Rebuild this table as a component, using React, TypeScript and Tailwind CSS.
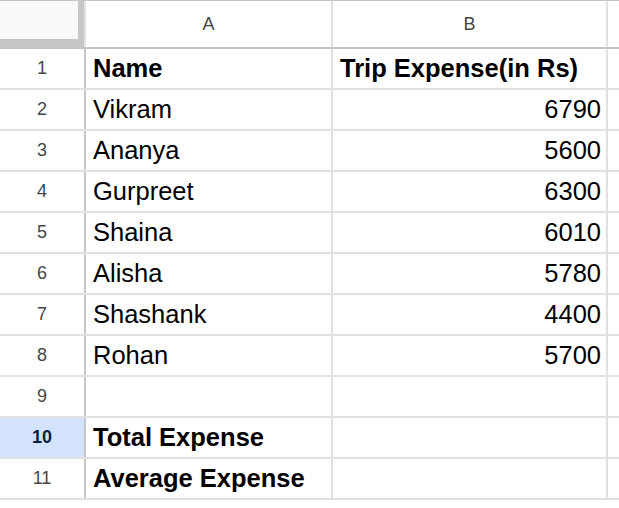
const rows: { name: string; amount: string; bold?: boolean }[] = [
  { name: "Name", amount: "Trip Expense(in Rs)", bold: true },
  { name: "Vikram", amount: "6790" },
  { name: "Ananya", amount: "5600" },
  { name: "Gurpreet", amount: "6300" },
  { name: "Shaina", amount: "6010" },
  { name: "Alisha", amount: "5780" },
  { name: "Shashank", amount: "4400" },
  { name: "Rohan", amount: "5700" },
  { name: "", amount: "" },
  { name: "Total Expense", amount: "", bold: true },
  { name: "Average Expense", amount: "", bold: true },
];

const App = () => {
  return (
    <div
      className="w-[619px] h-[508px] overflow-hidden bg-white border-t border-[#c4c7c5]"
      style={{ fontFamily: '"Liberation Sans", Arial, sans-serif' }}
    >
      {/* column headers */}
      <div className="flex h-[48px] border-b-2 border-[#c4c7c5]">
        <div className="w-[86px] shrink-0 border-r-2 border-[#e1e1e1]">
          <div className="w-[84px] h-[46px] bg-[#f8f9fa] border-r-[6px] border-b-[8px] border-[#c4c7c5]" />
        </div>
        <div className="w-[247px] shrink-0 border-r-2 border-[#e1e1e1] flex items-center justify-center text-[18px] text-[#444746]">
          A
        </div>
        <div className="w-[275px] shrink-0 border-r-2 border-[#e1e1e1] flex items-center justify-center text-[18px] text-[#444746]">
          B
        </div>
        <div className="flex-1" />
      </div>

      {rows.map((row, i) => {
        const selected = i === 9;
        return (
          <div key={i} className="flex h-[41px] border-b-2 border-[#e1e1e1]">
            <div
              className={
                selected
                  ? "w-[86px] shrink-0 border-r-2 border-[#c4c7c5] bg-[#d3e3fd] flex items-center justify-center text-[18px] font-bold text-[#0b1f44]"
                  : "w-[86px] shrink-0 border-r-2 border-[#c4c7c5] flex items-center justify-center text-[18px] text-[#444746]"
              }
            >
              {i + 1}
            </div>
            <div
              className={
                row.bold
                  ? "w-[247px] shrink-0 border-r-2 border-[#e1e1e1] pl-[7px] flex items-center text-[25.5px] font-bold text-black whitespace-nowrap"
                  : "w-[247px] shrink-0 border-r-2 border-[#e1e1e1] pl-[7px] flex items-center text-[25.5px] text-black whitespace-nowrap"
              }
            >
              {row.name}
            </div>
            <div
              className={
                row.bold
                  ? "w-[275px] shrink-0 border-r-2 border-[#e1e1e1] pl-[7px] flex items-center text-[25.5px] font-bold text-black whitespace-nowrap"
                  : "w-[275px] shrink-0 border-r-2 border-[#e1e1e1] pr-[5px] flex items-center justify-end text-[25.5px] text-black whitespace-nowrap"
              }
            >
              {row.amount}
            </div>
            <div className="flex-1" />
          </div>
        );
      })}
    </div>
  );
};

export default App;
